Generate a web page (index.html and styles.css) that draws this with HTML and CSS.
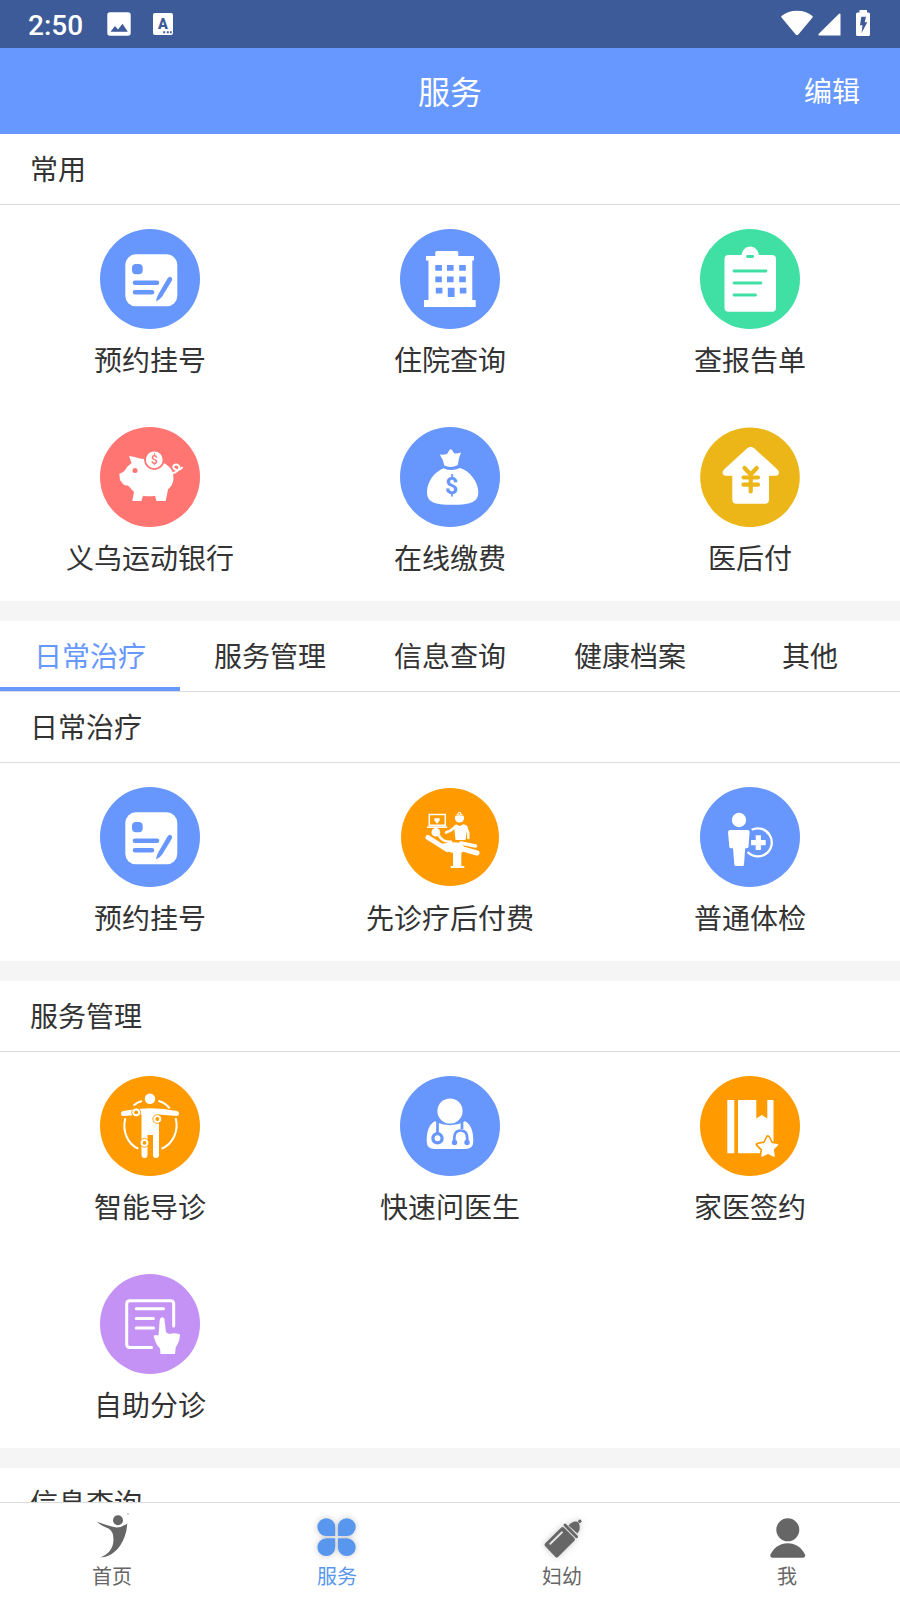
FILE: index.html
```html
<!DOCTYPE html>
<html lang="zh-CN">
<head>
<meta charset="utf-8">
<title>服务</title>
<link rel="stylesheet" href="styles.css">
</head>
<body>
<svg class="defs" aria-hidden="true">
  <symbol id="register" viewBox="0 0 100 100">
    <circle cx="50" cy="50" r="50" fill="#6796fd"/>
    <rect x="25.3" y="25.3" width="52" height="52" rx="10.5" fill="#fff"/>
    <rect x="32" y="35" width="10.7" height="10.2" rx="4" fill="#6796fd"/>
    <g fill="none" stroke="#6796fd" stroke-linecap="round" stroke-width="4.6"><path d="M35 53.7H57M35 63.3H52"/></g>
    <path d="M67.5 49.5Q70 46 72.2 49.5Q72.400 51 71 53L62.500 67Q60 71 56 72.500Q56.500 68.500 58.500 65Z" fill="#6796fd"/>
  </symbol>
</svg>

<div class="screen">
  <header class="status">
    <div class="status-left">
      <span class="time">2:50</span>
      <svg class="ic-photo" viewBox="0 0 24 24"><rect x=".3" y=".3" width="23.400" height="23.400" rx="2.700" fill="#fff"/><path d="M3.500 19.800L8 14L11 17.500L15.500 11.800L20.800 19.800Z" fill="#3d5b99"/></svg>
      <svg class="ic-a" viewBox="0 0 20 22"><rect width="20" height="22" rx="2" fill="#fff"/><text x="10" y="16" text-anchor="middle" class="a-letter">A</text><path d="M10.200 19.200h2M13.800 19.200h2M17 19.200h1.700" stroke="#3d5b99" stroke-width="1.900"/></svg>
    </div>
    <div class="status-right">
      <svg width="32" height="26" viewBox="0 0 32 26"><path d="M.5 6Q7 .7 16 .7T31.500 6Q32 6.800 31.300 7.700L17.300 24.400Q16 25.800 14.700 24.400L.7 7.700Q0 6.800 .5 6Z" fill="#fff"/></svg>
      <svg class="ic-signal" width="23" height="23" viewBox="0 0 23 23"><path d="M22.500 1.600V22.500H1.400Q-.3 22.300 .8 20.800L20.800 .9Q22 0 22.500 1.600Z" fill="#fff"/></svg>
      <svg class="ic-battery" width="14" height="26" viewBox="0 0 14 26"><path d="M3.500 0h7.500v2.500H12.500Q14 2.600 14 4V24.500Q14 26 12.500 26H1.500Q0 26 0 24.500V4Q0 2.600 1.500 2.500H3.500Z" fill="#fff"/><path d="M5.300 6.800H10L8.700 12.200H11.300L5.500 23L6.500 15.200H4Z" fill="#3d5b99"/></svg>
    </div>
  </header>

  <div class="titlebar"><span></span><h1>服务</h1><a class="edit">编辑</a></div>

  <main class="content">
    <section>
      <h2>常用</h2>
      <div class="grid">
        <div class="item"><svg class="icon"><use href="#register"/></svg><span>预约挂号</span></div>
        <div class="item">
          <svg class="icon" viewBox="0 0 100 100"><circle cx="50" cy="50" r="50" fill="#6796fd"/>
            <path d="M37 22H57Q58.300 22 58.300 23.500V27H74V31.500H72.300V71H75.700V78H24V71H28.500V31.500H26V27H35.300V23.500Q35.300 22 37 22Z" fill="#fff"/>
            <path d="M35.300 36h6.600v5.800h-6.600zM47 36h6.600v5.800H47zM59.200 36h6.600v5.800h-6.600zM35.300 47.500h6.600v5.800h-6.600zM47 47.500h6.600v5.800H47zM59.200 47.500h6.600v5.800h-6.600zM35.800 58.800h6.600v5.800h-6.600zM47.800 58.800h6.800v9.200h-6.800zM59.800 58.800h6.600v5.800h-6.600z" fill="#6796fd"/></svg>
          <span>住院查询</span></div>
        <div class="item">
          <svg class="icon" viewBox="0 0 100 100"><circle cx="50" cy="50" r="50" fill="#40dfa3"/>
            <path d="M28.500 26H41.500C42.500 21 45.500 17.500 50.200 17.500S58 21 59 26H72Q76 26 76 30V78.700Q76 82.700 72 82.700H28.500Q24.500 82.700 24.500 78.700V30Q24.500 26 28.500 26Z" fill="#fff"/>
            <path d="M47.500 27.500H52.700M34 42H66M34 54H61M34 66H55.500" stroke="#40dfa3" stroke-width="2.800" stroke-linecap="round"/></svg>
          <span>查报告单</span></div>
        <div class="item">
          <svg class="icon" viewBox="0 0 100 100"><circle cx="50" cy="50" r="50" fill="#ff7572"/>
            <path d="M29 29Q35 29.500 40 31.500L48 32.500L64 36Q71 40 73 46L73.500 52Q73 58 68 62.500L65.700 74H56.500L55 68.700Q49 69.700 43 68.700L41.500 74H32.300L34 65L28 58.500Q25 59 23 57L20 53L19.300 46.700Q24.500 45.500 27 40L31.500 36Z" fill="#fff"/>
            <circle cx="54.300" cy="32.800" r="10.200" fill="#ff7572"/><circle cx="54.300" cy="32.800" r="8.400" fill="#fff"/>
            <text x="54.500" y="37.100" text-anchor="middle" class="coin-sign">$</text>
            <circle cx="35" cy="43.500" r="2.500" fill="#ff7572"/>
            <path d="M72 46.500C78 45 81 41 78.500 38.500C75.500 36 71.500 39 74 41.500S80 43.500 82.200 40.500" fill="none" stroke="#fff" stroke-width="1.900" stroke-linecap="round"/></svg>
          <span>义乌运动银行</span></div>
        <div class="item">
          <svg class="icon" viewBox="0 0 100 100"><circle cx="50" cy="50" r="50" fill="#6796fd"/>
            <path d="M39.800 27.500Q44 28 47 27L49.500 23Q50.500 21.300 52 23L54.300 26.500Q57.500 26.800 61 25.500Q58.500 31 57.800 38Q51 41.500 44.300 38.500Q43 32 39.800 27.500ZM43.500 41.200Q51.500 45 60 41C70 44 78.300 55 78.300 65C78.300 75 71 77.800 52.500 77.800S27 75 27 65C27 55 34 45 43.500 41.200Z" fill="#fff"/>
            <text x="51.500" y="67" text-anchor="middle" class="bag-sign">$</text></svg>
          <span>在线缴费</span></div>
        <div class="item">
          <svg class="icon" viewBox="0 0 100 100"><circle cx="50" cy="50.300" r="49.800" fill="#edb618"/>
            <path d="M47.200 21.200Q50.700 18.200 54.200 21.200L77.500 42.500Q80 45.500 78.300 47.500Q77.500 48.700 75.500 48.700H69V72.500Q69 76.700 65 76.700H36.300Q32.300 76.700 32.300 72.500V48.700H26Q24 48.700 23.200 47.500Q21.500 45.500 24 42.500Z" fill="#fff"/>
            <path d="M44.500 41L50.700 47.500L56.700 41M50.700 48V64.500M43.500 50.500H58M43.500 57.700H58" fill="none" stroke="#edb618" stroke-width="4.200" stroke-linecap="round" stroke-linejoin="round"/></svg>
          <span>医后付</span></div>
      </div>
    </section>

    <nav class="tabs"><a class="active">日常治疗</a><a>服务管理</a><a>信息查询</a><a>健康档案</a><a>其他</a></nav>

    <section>
      <h2>日常治疗</h2>
      <div class="grid">
        <div class="item"><svg class="icon"><use href="#register"/></svg><span>预约挂号</span></div>
        <div class="item">
          <svg class="icon" viewBox="0 0 100 100"><circle cx="50" cy="50" r="49" fill="#ff9b01"/>
            <g fill="none" stroke="#fff" stroke-linecap="round">
              <path d="M29.300 27.500H45.300V38.200H29.300Z" stroke-width="1.500"/><path d="M27.800 40.200H46.500" stroke-width="1.700"/>
              <path d="M28 50.500L47 62.500" stroke-width="5"/><path d="M49 58L77 66" stroke-width="5"/><path d="M61 56L75.500 59" stroke-width="3.600"/>
              <path d="M39 48.500Q42 55 51 54.800" stroke-width="2.600"/>
              <path d="M46 45.500L51 43.500L56 39" stroke-width="2.600"/><path d="M66 39.500L68.300 46V51" stroke-width="2.400"/>
              <path d="M51.500 80H63.500" stroke-width="2"/>
            </g>
            <path d="M37 36.300L34.600 33.200Q34.300 31 36 31.300L37 32L38 31.300Q39.800 31 39.400 33.200Z" fill="#fff" stroke="#fff" stroke-width=".8"/>
            <circle cx="59.500" cy="31" r="4.600" fill="#fff"/><circle cx="59.500" cy="27" r="2" fill="#fff"/><circle cx="59.500" cy="26.800" r=".8" fill="#ff9b01"/><path d="M55.500 28.700Q59.500 27 63.500 28.700" fill="none" stroke="#ff9b01" stroke-width=".6"/>
            <circle cx="35.800" cy="45.300" r="4.300" fill="#fff"/>
            <path d="M56.500 37.500L59.500 39L63.500 37.200Q68 38 67 43L65.500 53H55.500L54.300 42Z" fill="#fff"/>
            <path d="M41 57Q52 54 61 56L66 62L61.300 66V79H53V66L46 64Z" fill="#fff"/></svg>
          <span>先诊疗后付费</span></div>
        <div class="item">
          <svg class="icon" viewBox="0 0 100 100"><circle cx="50" cy="50" r="50" fill="#6796fd"/>
            <circle cx="39" cy="33" r="7.200" fill="#fff"/>
            <path d="M30.500 43H47.500Q49.700 43 49.600 45L48.500 60Q48.400 61.300 46 61.300H45.200L44 77.500Q44 79 42.500 79H35.800Q34.500 79 34.300 77.500L33 61.300H31Q29.500 61.300 29.300 60L28 45Q28 43 30.500 43Z" fill="#fff"/>
            <path d="M51.700 42.800A14 14 0 1 1 47.600 65" fill="none" stroke="#fff" stroke-width="2.300"/>
            <path d="M58.300 48.200V63M51 55.600H65.700" stroke="#fff" stroke-width="5.200"/></svg>
          <span>普通体检</span></div>
      </div>
    </section>

    <section>
      <h2>服务管理</h2>
      <div class="grid">
        <div class="item">
          <svg class="icon" viewBox="0 0 100 100"><circle cx="50" cy="50" r="50" fill="#ff9b01"/>
            <circle cx="50" cy="22.700" r="5.200" fill="#fff"/>
            <path d="M23 35Q50 29.500 77 35Q79 35.500 79 37.500Q79 40 76.500 40L59 38.500V79Q59 82 56 82T53 79V59H47.500V79Q47.500 82 44.500 82T41.500 79V38.500L23.500 40Q21 40 21 37.500Q21 35.500 23 35Z" fill="#fff"/>
            <path d="M25.300 42.300C22 55 27.500 68 38.300 72.700M75.700 42.300C79 55 73 68 61.500 72.700M33.500 29.500Q37.500 26 42 25M58.500 25Q65 26.500 69.700 32.300" fill="none" stroke="#fff" stroke-width="2"/>
            <g fill="#fff" stroke="#ff9b01" stroke-width=".9"><circle cx="36.200" cy="36.300" r="4.400"/><circle cx="57.300" cy="43" r="4.400"/><circle cx="44.500" cy="66.800" r="4.400"/></g>
            <g fill="#ff9b01"><circle cx="36.200" cy="36.300" r="1.900"/><circle cx="57.300" cy="43" r="1.900"/><circle cx="44.500" cy="66.800" r="1.900"/></g></svg>
          <span>智能导诊</span></div>
        <div class="item">
          <svg class="icon" viewBox="0 0 100 100"><circle cx="50" cy="50" r="50" fill="#6796fd"/>
            <circle cx="50" cy="35" r="12.600" fill="#fff"/>
            <path d="M35 45.300Q50 53 65 45.300C71 48.500 73.300 55 73.300 65Q73.300 73 65.500 73H34.500Q26.700 73 26.700 65C26.700 55 29 48.500 35 45.300Z" fill="#fff"/>
            <g fill="none" stroke="#6796fd" stroke-width="2.700"><path d="M37.500 44V58M62 44V53"/><circle cx="37.500" cy="62.300" r="4.600" stroke-width="3.300"/><path d="M54.300 67V62Q54.300 54.500 60.700 54.500T67.200 62V67"/></g>
            <circle cx="54.500" cy="66.500" r="2.700" fill="#6796fd"/><circle cx="67" cy="66.500" r="2.700" fill="#6796fd"/></svg>
          <span>快速问医生</span></div>
        <div class="item">
          <svg class="icon" viewBox="0 0 100 100"><circle cx="50" cy="50" r="50" fill="#ff9b01"/>
            <path d="M27.300 24H34.300V77.300H27.300ZM38 24H56.300V42.500L61.700 39L67.300 42.500V24H73.500V77.300H38Z" fill="#fff"/>
            <path d="M68 61.500L71 67.500L78 68.700L73.300 73.500L74.300 80.300L68 77.300L61.700 80.300L62.700 73.500L58 68.700L65 67.500Z" fill="#ff9b01" stroke="#ff9b01" stroke-width="4.600" stroke-linejoin="round"/>
            <path d="M68 61.700L71 67.700L77.500 68.700L73 73.300L74 80L68 77L62 80L63 73.300L58.500 68.700L65 67.700Z" fill="#fff" stroke="#fff" stroke-width="1.600" stroke-linejoin="round"/></svg>
          <span>家医签约</span></div>
        <div class="item">
          <svg class="icon" viewBox="0 0 100 100"><circle cx="50" cy="50" r="50" fill="#c492f5"/>
            <path d="M73.700 52V30Q73.700 26.700 70.400 26.700H30Q26.700 26.700 26.700 30V70.300Q26.700 73.600 30 73.600H51.500M36.200 34.700H63.500M36.200 44.500H53.500M36.200 54H53.500" fill="none" stroke="#fff" stroke-width="3" stroke-linecap="round"/>
            <path d="M59.700 46Q60 43.300 62.200 43.300T64.500 46L66 58.500L69.500 60Q75 58.500 80 60.500Q80 67 75.700 73.500L75 80H60.500L60 74.500Q56 71 53.700 62.500Q53.500 60 58.500 61.500Z" fill="#fff"/></svg>
          <span>自助分诊</span></div>
      </div>
    </section>

    <section><h2>信息查询</h2></section>
  </main>

  <footer class="bottom">
    <a><svg viewBox="0 0 48 48"><circle cx="30" cy="8.300" r="5" fill="#666"/><path d="M9 9.700Q17 12.700 23 14.300Q31 17.500 39.200 11.500Q39 19 36.500 25C32 37 23 45.500 12.500 45.300Q25 40.500 25.500 28Q25.500 19 20.500 16.500Q13 14 9 9.700Z" fill="#666"/><circle cx="40" cy="2" r=".7" fill="#888"/></svg><span>首页</span></a>
    <a class="active"><svg class="clover" viewBox="0 0 48 48"><path d="M22.200 24H13.300A8.900 8.900 0 1 1 22.200 15.200ZM24.900 24V15.200A8.900 8.900 0 1 1 33.800 24ZM22.200 26.300V35.200A8.900 8.900 0 1 1 13.300 26.300ZM24.900 26.300H33.800A8.900 8.900 0 1 1 24.900 35.200Z" fill="#5997ef"/></svg><span>服务</span></a>
    <a><svg class="bottle" viewBox="0 0 48 48"><path d="M23.300 15.500Q24.800 14.500 26 15.700L36.300 26Q37.500 27.500 36.300 28.700L20 45Q18.800 46.200 17.500 45L7 34Q6 32.800 7 31.500Z" fill="#666"/><path d="M12.300 31.800L24 20.300" stroke="#e3e3e3" stroke-width="1.900" stroke-linecap="round"/><path d="M27 13L38.600 24.800" stroke="#666" stroke-width="2.800" stroke-linecap="round"/><path d="M30.500 13.500Q35 8.500 39.500 9.800L41 11.500Q43 17 39.500 21.500Z" fill="#666"/><circle cx="41.800" cy="9.300" r="1.700" fill="#666"/></svg><span>妇幼</span></a>
    <a><svg viewBox="0 0 48 48"><circle cx="24.800" cy="17.800" r="11.500" fill="#666"/><path d="M10 45.700Q6.500 45.500 7.500 42.500C11 35.500 17 31.300 24.700 31.300S38.500 35.500 42 42.500Q43 45.500 39.500 45.700Z" fill="#666"/></svg><span>我</span></a>
  </footer>
</div>
</body>
</html>
```
FILE: styles.css
```css
* { box-sizing: border-box; }
body {
  margin: 0;
  font-family: "Noto Sans CJK SC", sans-serif;
  font-weight: 400;
  color: #333;
  background: #fff;
}
h1, h2 { margin: 0; font-weight: 400; }
svg { display: block; flex: none; }
.defs { position: absolute; width: 0; height: 0; }

.screen {
  display: flex;
  flex-direction: column;
  width: 900px;
  height: 1600px;
  overflow: hidden;
}

.status {
  display: flex;
  justify-content: space-between;
  flex: none;
  height: 48px;
  padding: 0 30px 0 28px;
  background: #3d5b99;
  color: #fff;
}
.status-left { display: flex; align-items: center; }
.time {
  width: 79px;
  font: 500 28px/48px Roboto, sans-serif;
  padding-top: 3px;
}
.ic-photo { width: 24px; height: 24px; }
.ic-a { width: 20px; height: 22px; margin-left: 22px; }
.a-letter { font: 900 14.5px Roboto, sans-serif; fill: #3d5b99; }
.status-right { display: flex; align-items: flex-end; padding-bottom: 12px; }
.ic-signal { margin-left: 5px; }
.ic-battery { margin-left: 15px; }

.titlebar {
  display: grid;
  grid-template-columns: 1fr auto 1fr;
  align-items: center;
  flex: none;
  height: 86px;
  padding: 0 40px;
  background: #6698ff;
  color: #fff;
}
.titlebar h1 { font-size: 32px; line-height: 84px; padding-bottom: 2px; }
.edit { justify-self: end; font-size: 28px; line-height: 84px; padding-bottom: 2px; }

.content { flex: 1; min-height: 0; overflow: hidden; }
section + section { border-top: 20px solid #f5f5f5; }
h2 {
  height: 71px;
  padding-left: 30px;
  border-bottom: 1px solid #dcdcdc;
  font-size: 28px;
  line-height: 68px;
}
.grid { display: grid; grid-template-columns: repeat(3, 300px); }
.item {
  display: flex;
  flex-direction: column;
  align-items: center;
  height: 198px;
  padding-top: 24px;
  font-size: 28px;
  line-height: 42px;
}
.item span { margin-top: 9px; }
.icon { width: 100px; height: 100px; }
.coin-sign { font: 500 12px Roboto, sans-serif; fill: #ff7572; }
.bag-sign { font: 700 23px Roboto, sans-serif; fill: #6796fd; }

.tabs {
  display: grid;
  grid-template-columns: repeat(5, 1fr);
  height: 91px;
  border-top: 20px solid #f5f5f5;
  border-bottom: 1px solid #dcdcdc;
  font-size: 28px;
  line-height: 68px;
  text-align: center;
}
.tabs .active { color: #6698ff; box-shadow: inset 0 -4px #6698ff; }

.bottom {
  display: grid;
  grid-template-columns: repeat(4, 1fr);
  flex: none;
  height: 98px;
  border-top: 1px solid #dcdcdc;
  background: #fff;
  color: #666;
  font-size: 20px;
  line-height: 30px;
}
.bottom a { display: flex; flex-direction: column; align-items: center; padding: 9px 1px 0 0; }
.bottom span { margin-top: 1px; }
.bottom svg { width: 48px; height: 48px; }
.bottom .active { color: #5997ef; }
.clover, .bottle { overflow: visible; filter: drop-shadow(0 0 3px rgba(0, 0, 0, .22)); }
```
